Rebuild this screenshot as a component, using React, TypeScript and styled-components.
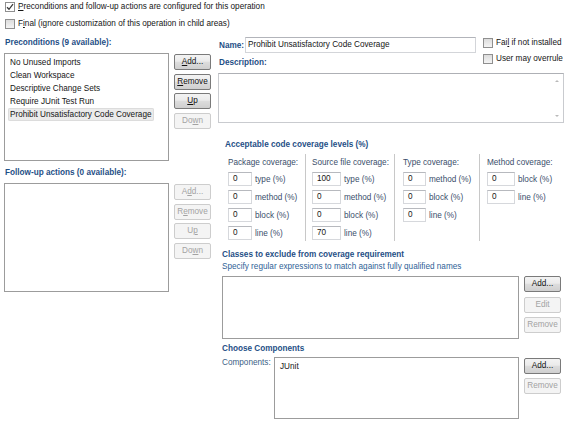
import React from "react";
import styled, { createGlobalStyle } from "styled-components";

const GlobalStyle = createGlobalStyle`
  html, body {
    margin: 0;
    padding: 0;
    background: #fff;
  }
  body {
    font-family: "Liberation Sans", Arial, sans-serif;
    font-size: 8.2px;
    color: #151515;
  }
  * { box-sizing: border-box; }
`;

const Page = styled.div`
  width: 567px;
  height: 425px;
  overflow: hidden;
  background: #fff;
  display: flex;
  flex-direction: column;
`;

const TopChecks = styled.div`
  display: flex;
  flex-direction: column;
  gap: 5px;
  padding: 1px 0 0 5px;
`;

const CheckRow = styled.label`
  display: flex;
  align-items: center;
  gap: 3px;
  height: 12px;
  line-height: 12px;
  white-space: nowrap;
`;

const Box = styled.span<{ $checked?: boolean }>`
  width: 10px;
  height: 10px;
  flex: none;
  border: 1px solid #8f8f8f;
  background: ${(p) => (p.$checked ? "#fff" : "linear-gradient(#dcdcdc, #f4f4f4)")};
  display: flex;
  align-items: center;
  justify-content: center;
  svg { display: block; }
`;

const U = styled.span`
  text-decoration: underline;
`;

const Main = styled.div`
  display: flex;
  gap: 7px;
  padding: 7px 0 0 4px;
`;

const LeftPane = styled.div`
  width: 207px;
  display: flex;
  flex-direction: column;
`;

const SectionTitle = styled.div<{ $indent?: number; $top?: number }>`
  font-weight: bold;
  color: #1f4f86;
  height: 12px;
  line-height: 12px;
  white-space: nowrap;
  padding-left: ${(p) => p.$indent ?? 0}px;
  margin-top: ${(p) => p.$top ?? 0}px;
`;

const Hint = styled.div`
  color: #2f5f96;
  height: 12px;
  line-height: 12px;
  padding-left: 4px;
  white-space: nowrap;
`;

const ListRow = styled.div<{ $top?: number; $indent?: number }>`
  display: flex;
  gap: 5px;
  align-items: flex-start;
  margin-top: ${(p) => p.$top ?? 4}px;
  padding-left: ${(p) => p.$indent ?? 0}px;
`;

const ListBox = styled.div<{ $w: number; $h: number }>`
  width: ${(p) => p.$w}px;
  height: ${(p) => p.$h}px;
  border: 1px solid #9c9c9c;
  background: #fff;
  padding: 2px 3px;
  display: flex;
  flex-direction: column;
  align-items: flex-start;
`;

const ListItem = styled.div<{ $selected?: boolean }>`
  height: 13px;
  line-height: 13px;
  padding: 0 2px;
  white-space: nowrap;
  border-radius: 2px;
  background: ${(p) => (p.$selected ? "#ebebeb" : "transparent")};
  box-shadow: ${(p) => (p.$selected ? "inset 0 0 0 1px #dcdcdc" : "none")};
`;

const ButtonColumn = styled.div<{ $gap?: number; $top?: number }>`
  display: flex;
  flex-direction: column;
  gap: ${(p) => p.$gap ?? 3.5}px;
  padding-top: ${(p) => p.$top ?? 1}px;
`;

const Button = styled.button<{ $disabled?: boolean }>`
  width: 37px;
  height: 16px;
  padding: 0;
  font-family: inherit;
  font-size: 8.2px;
  border-radius: 2px;
  border: 1px solid ${(p) => (p.$disabled ? "#cdcdcd" : "#7a7a7a")};
  color: ${(p) => (p.$disabled ? "#a3a3a3" : "#111")};
  background: ${(p) =>
    p.$disabled
      ? "#f4f4f4"
      : "linear-gradient(#f3f3f3 0%, #ebebeb 45%, #dddddd 50%, #cfcfcf 100%)"};
  line-height: 14px;
  text-align: center;
`;

const RightPane = styled.div`
  width: 346px;
  display: flex;
  flex-direction: column;
`;

const HeaderGrid = styled.div`
  display: flex;
  gap: 7px;
`;

const HeaderMain = styled.div`
  display: flex;
  flex-direction: column;
`;

const NameRow = styled.div`
  display: flex;
  align-items: center;
  height: 16px;
`;

const NameLabel = styled.span`
  font-weight: bold;
  color: #1f4f86;
  width: 27px;
  padding-left: 1px;
`;

const TextInput = styled.div<{ $w: number }>`
  width: ${(p) => p.$w}px;
  height: 16px;
  line-height: 14px;
  border: 1px solid #d3d5d9;
  border-top-color: #b2b4ba;
  padding: 0 2px;
  white-space: nowrap;
  overflow: hidden;
`;

const SideChecks = styled.div`
  display: flex;
  flex-direction: column;
  gap: 4px;
`;

const TextArea = styled.div`
  margin-top: 4px;
  height: 50px;
  border: 1px solid #c9cbcf;
  border-top-color: #aeb0b5;
  display: flex;
  justify-content: flex-end;
`;

const ScrollTrack = styled.div`
  width: 13px;
  display: flex;
  flex-direction: column;
  align-items: center;
  justify-content: space-between;
  padding: 6px 0 5px;
`;

const Arrow = styled.span<{ $down?: boolean }>`
  width: 0;
  height: 0;
  border-left: 2.5px solid transparent;
  border-right: 2.5px solid transparent;
  ${(p) =>
    p.$down ? "border-top: 2.5px solid #b9b9b9;" : "border-bottom: 2.5px solid #b9b9b9;"}
`;

const CoverageGrid = styled.div`
  display: flex;
  padding-left: 10px;
  margin-top: 3px;
`;

const CovColumn = styled.div<{ $w: number; $pad: number; $last?: boolean }>`
  width: ${(p) => p.$w}px;
  padding: 3px 0 2px ${(p) => p.$pad}px;
  border-right: ${(p) => (p.$last ? "none" : "1px solid #c8c8c8")};
  display: flex;
  flex-direction: column;
  gap: 4px;
  height: 87px;
`;

const ColHeader = styled.div`
  height: 12px;
  line-height: 12px;
  color: #3a4e6a;
  white-space: nowrap;
  margin-bottom: -1px;
`;

const CovRow = styled.div`
  display: flex;
  align-items: center;
  gap: 3px;
  height: 14px;
  white-space: nowrap;
`;

const NumInput = styled.div<{ $w: number }>`
  width: ${(p) => p.$w}px;
  height: 14px;
  line-height: 12px;
  border: 1px solid #d6d8dc;
  border-top-color: #b7b9be;
  padding-left: 4px;
`;

const CovLabel = styled.span`
  color: #3a4e6a;
`;

const CompRow = styled.div`
  display: flex;
  gap: 5px;
  margin-top: 2px;
  padding-left: 4px;
`;

const CompLabel = styled.div`
  width: 47px;
  color: #3d5f86;
  line-height: 12px;
  white-space: nowrap;
`;

const Check = ({ checked }: { checked?: boolean }) => (
  <Box $checked={checked}>
    {checked && (
      <svg width="8" height="8" viewBox="0 0 8 8">
        <path d="M1 4.2 L3 6.3 L7 1.2" fill="none" stroke="#3a3a3a" strokeWidth="1.3" />
      </svg>
    )}
  </Box>
);

type Col = { title: string; w: number; pad: number; inputW: number; rows: [string, string][] };

const columns: Col[] = [
  {
    title: "Package coverage:",
    w: 78,
    pad: 0,
    inputW: 24,
    rows: [["0", "type (%)"], ["0", "method (%)"], ["0", "block (%)"], ["0", "line (%)"]],
  },
  {
    title: "Source file coverage:",
    w: 89,
    pad: 6,
    inputW: 29,
    rows: [["100", "type (%)"], ["0", "method (%)"], ["0", "block (%)"], ["70", "line (%)"]],
  },
  {
    title: "Type coverage:",
    w: 85,
    pad: 8,
    inputW: 23,
    rows: [["0", "method (%)"], ["0", "block (%)"], ["0", "line (%)"]],
  },
  {
    title: "Method coverage:",
    w: 80,
    pad: 7,
    inputW: 28,
    rows: [["0", "block (%)"], ["0", "line (%)"]],
  },
];

const preconditions = [
  "No Unused Imports",
  "Clean Workspace",
  "Descriptive Change Sets",
  "Require JUnit Test Run",
  "Prohibit Unsatisfactory Code Coverage",
];

export default function App() {
  return (
    <Page>
      <GlobalStyle />
      <TopChecks>
        <CheckRow>
          <Check checked />
          <span>
            <U>P</U>reconditions and follow-up actions are configured for this operation
          </span>
        </CheckRow>
        <CheckRow>
          <Check />
          <span>
            F<U>i</U>nal (ignore customization of this operation in child areas)
          </span>
        </CheckRow>
      </TopChecks>

      <Main>
        <LeftPane>
          <SectionTitle $indent={1}>Preconditions (9 available):</SectionTitle>
          <ListRow>
            <ListBox $w={165} $h={108}>
              {preconditions.map((p, i) => (
                <ListItem key={p} $selected={i === preconditions.length - 1}>
                  {p}
                </ListItem>
              ))}
            </ListBox>
            <ButtonColumn>
              <Button><U>A</U>dd...</Button>
              <Button><U>R</U>emove</Button>
              <Button><U>U</U>p</Button>
              <Button $disabled>Do<U>w</U>n</Button>
            </ButtonColumn>
          </ListRow>

          <SectionTitle $indent={1} $top={6}>Follow-up actions (0 available):</SectionTitle>
          <ListRow>
            <ListBox $w={165} $h={109} />
            <ButtonColumn>
              <Button $disabled>A<U>d</U>d...</Button>
              <Button $disabled>R<U>e</U>move</Button>
              <Button $disabled>U<U>p</U></Button>
              <Button $disabled>Do<U>w</U>n</Button>
            </ButtonColumn>
          </ListRow>
        </LeftPane>

        <RightPane>
          <HeaderGrid>
            <HeaderMain>
              <NameRow>
                <NameLabel>Name:</NameLabel>
                <TextInput $w={231}>Prohibit Unsatisfactory Code Coverage</TextInput>
              </NameRow>
              <SectionTitle $indent={1} $top={4}>Description:</SectionTitle>
            </HeaderMain>
            <SideChecks>
              <CheckRow>
                <Check />
                <span>
                  Fai<U>l</U> if not installed
                </span>
              </CheckRow>
              <CheckRow>
                <Check />
                <span>User may overrule</span>
              </CheckRow>
            </SideChecks>
          </HeaderGrid>
          <TextArea>
            <ScrollTrack>
              <Arrow />
              <Arrow $down />
            </ScrollTrack>
          </TextArea>

          <SectionTitle $indent={7} $top={16}>Acceptable code coverage levels (%)</SectionTitle>
          <CoverageGrid>
            {columns.map((c, ci) => (
              <CovColumn key={c.title} $w={c.w} $pad={c.pad} $last={ci === columns.length - 1}>
                <ColHeader>{c.title}</ColHeader>
                {c.rows.map(([v, l]) => (
                  <CovRow key={l}>
                    <NumInput $w={c.inputW}>{v}</NumInput>
                    <CovLabel>{l}</CovLabel>
                  </CovRow>
                ))}
              </CovColumn>
            ))}
          </CoverageGrid>

          <SectionTitle $indent={4} $top={8}>Classes to exclude from coverage requirement</SectionTitle>
          <Hint>Specify regular expressions to match against fully qualified names</Hint>
          <ListRow $top={3} $indent={4}>
            <ListBox $w={297} $h={63} />
            <ButtonColumn $gap={4.5} $top={0}>
              <Button>Add...</Button>
              <Button $disabled>Edit</Button>
              <Button $disabled>Remove</Button>
            </ButtonColumn>
          </ListRow>

          <SectionTitle $indent={4} $top={4}>Choose Components</SectionTitle>
          <CompRow>
            <CompLabel>Components:</CompLabel>
            <ListBox $w={245} $h={62}>
              <ListItem>JUnit</ListItem>
            </ListBox>
            <ButtonColumn $gap={4}>
              <Button>Add...</Button>
              <Button $disabled>Remove</Button>
            </ButtonColumn>
          </CompRow>
        </RightPane>
      </Main>
    </Page>
  );
}
